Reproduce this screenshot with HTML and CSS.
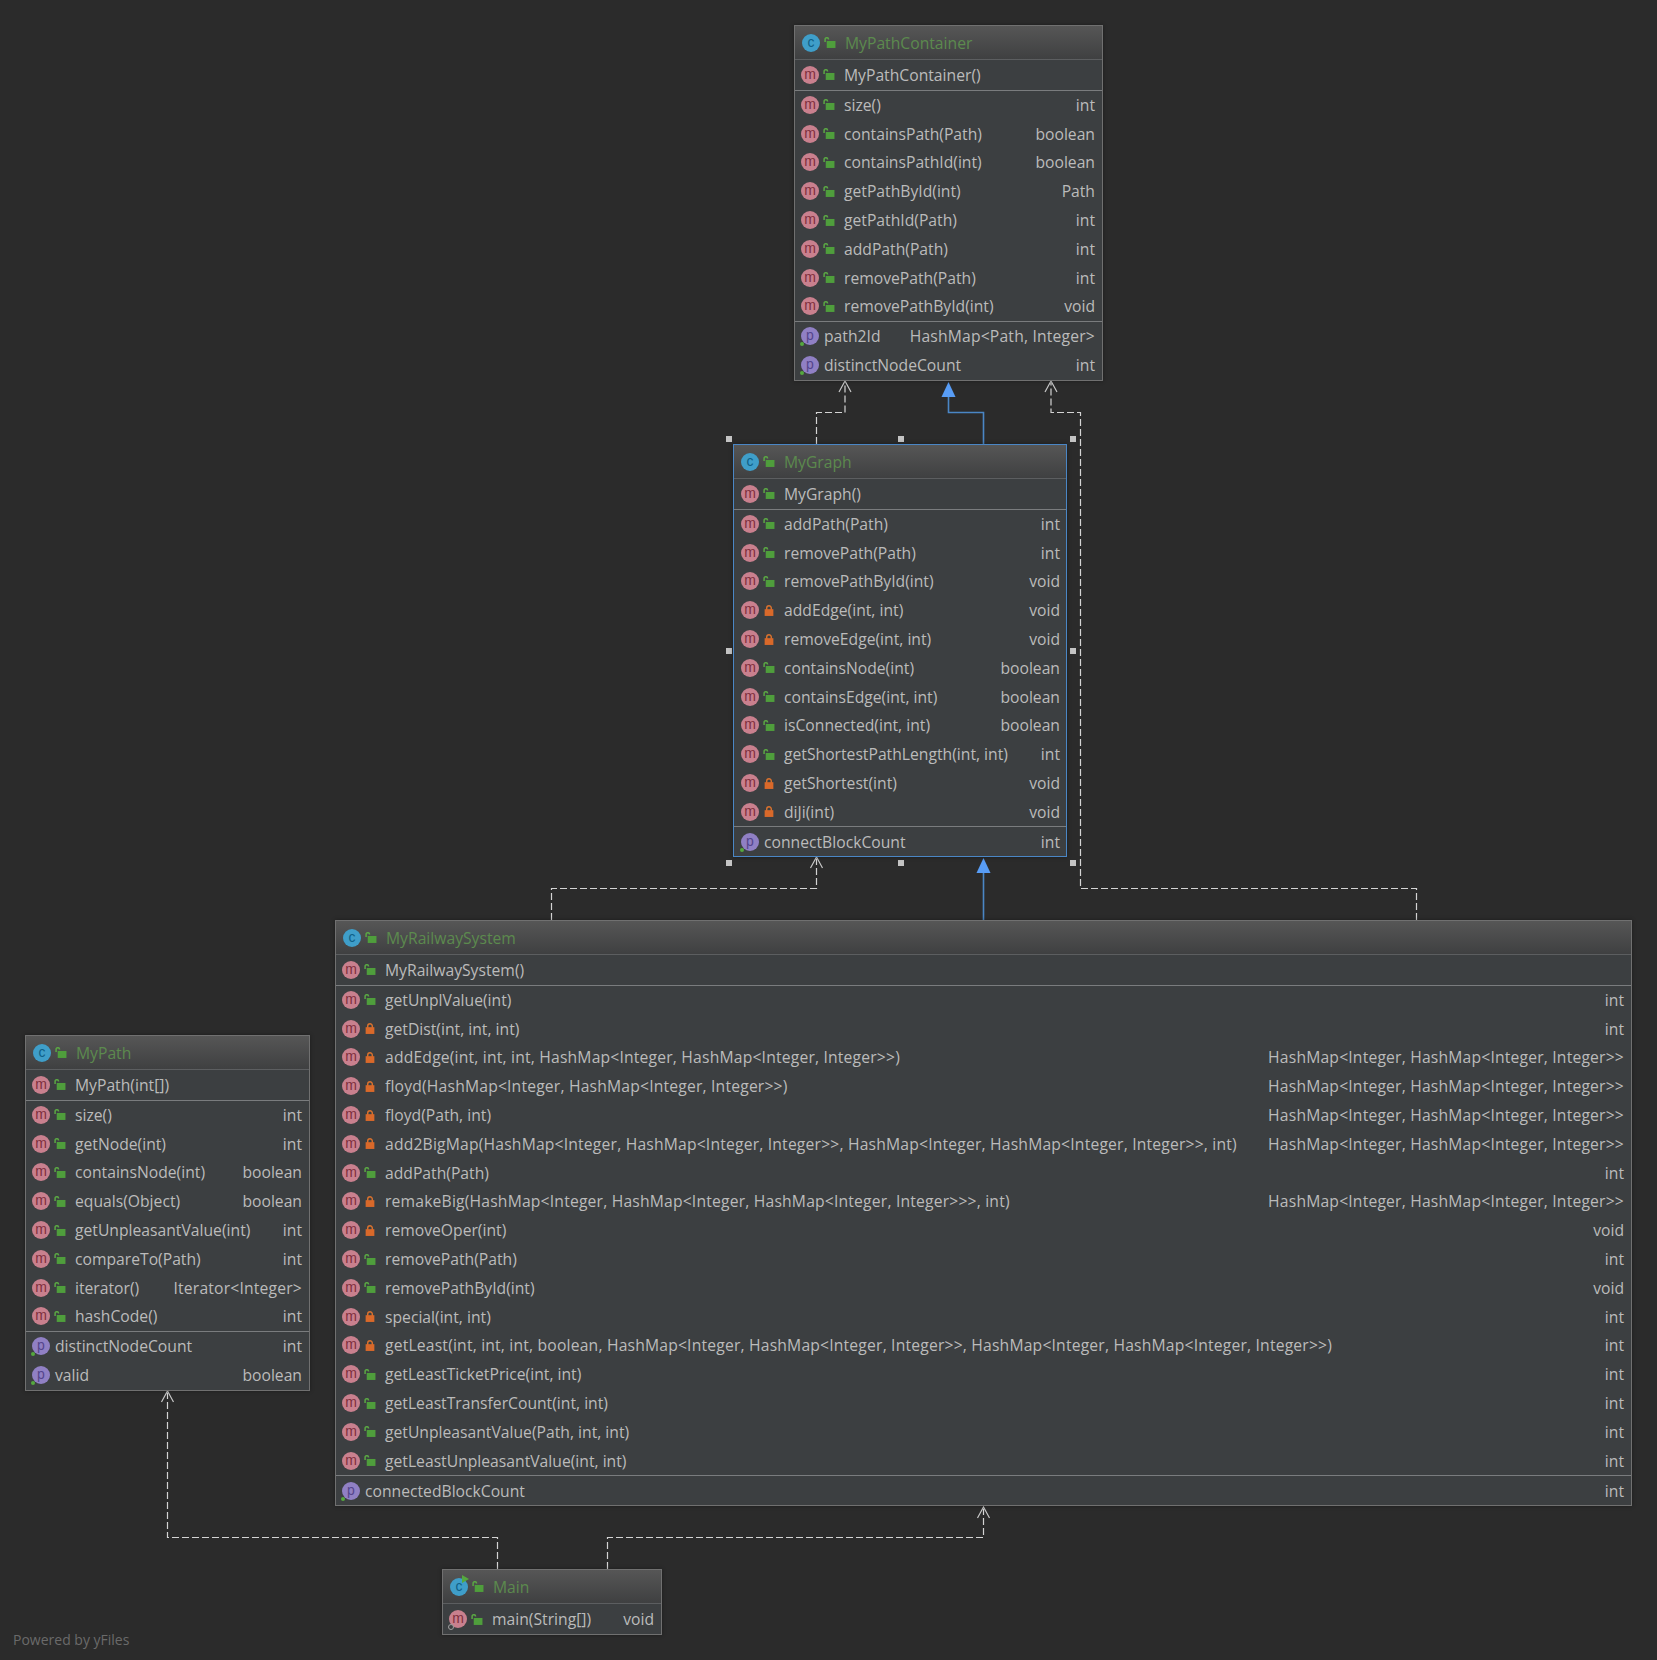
FILE: index.html
```html
<!DOCTYPE html>
<html lang="en">
<head>
    <meta charset="UTF-8">
    <title>Diagram</title>
    <link rel="stylesheet" href="styles.css">
</head>
<body>
<svg class="defs" width="0" height="0">
    <symbol id="pub" viewBox="0 0 11 10">
        <path d="M1 4.5V2.2C1 1 1.8.6 2.6.6S4.2 1 4.2 2.2" fill="none" stroke="#5aa544" stroke-width="1.4"/>
        <rect x="2.5" y="3.6" width="8" height="6.4" fill="#4f9e3c"/>
    </symbol>
    <symbol id="pri" viewBox="0 0 11 10">
        <path d="M3.4 4.5V2.8a2.1 2.1 0 0 1 4.2 0v1.7" fill="none" stroke="#d9722e" stroke-width="1.3"/>
        <rect x="1.5" y="3.8" width="8" height="6.2" fill="#d9692a"/>
    </symbol>
</svg>

<div class="canvas">
    <svg class="edges" width="1657" height="1660" viewBox="0 0 1657 1660">
        <g class="dash">
            <path d="M816.5 444V412.5H845V383"/>
            <path d="M1416.5 920V888.5H1080.5V412.5H1051V383"/>
            <path d="M551.5 920V888.5H816.5V859"/>
            <path d="M497.5 1569V1537.5H167.5V1393"/>
            <path d="M607.5 1569V1537.5H983.5V1509"/>
        </g>
        <g class="open">
            <path d="M839 392L845 381L851 392"/>
            <path d="M1045 392L1051 381L1057 392"/>
            <path d="M810.5 868L816.5 857L822.5 868"/>
            <path d="M161.5 1402L167.5 1391L173.5 1402"/>
            <path d="M977.5 1518L983.5 1507L989.5 1518"/>
        </g>
        <g class="solid">
            <path d="M983.5 444V412.5H948.5V396"/>
            <path d="M983.5 920V871"/>
        </g>
        <g class="head">
            <path d="M948.5 382L955.5 397H941.5Z"/>
            <path d="M983.5 858L990.5 873H976.5Z"/>
        </g>
        <g class="handles">
            <rect x="726" y="436" width="6" height="6"/>
            <rect x="898" y="436" width="6" height="6"/>
            <rect x="1070" y="436" width="6" height="6"/>
            <rect x="726" y="648" width="6" height="6"/>
            <rect x="1070" y="648" width="6" height="6"/>
            <rect x="726" y="860" width="6" height="6"/>
            <rect x="898" y="860" width="6" height="6"/>
            <rect x="1070" y="860" width="6" height="6"/>
        </g>
    </svg>

    <div class="node container-node">
        <div class="title"><i class="ic c">c</i><svg class="lock"><use href="#pub"/></svg><span>MyPathContainer</span></div>
        <div class="ctor"><i class="ic m">m</i><svg class="lock"><use href="#pub"/></svg><span>MyPathContainer()</span></div>
        <div class="methods">
            <div class="row"><i class="ic m">m</i><svg class="lock"><use href="#pub"/></svg><span>size()</span><b>int</b></div>
            <div class="row"><i class="ic m">m</i><svg class="lock"><use href="#pub"/></svg><span>containsPath(Path)</span><b>boolean</b></div>
            <div class="row"><i class="ic m">m</i><svg class="lock"><use href="#pub"/></svg><span>containsPathId(int)</span><b>boolean</b></div>
            <div class="row"><i class="ic m">m</i><svg class="lock"><use href="#pub"/></svg><span>getPathById(int)</span><b>Path</b></div>
            <div class="row"><i class="ic m">m</i><svg class="lock"><use href="#pub"/></svg><span>getPathId(Path)</span><b>int</b></div>
            <div class="row"><i class="ic m">m</i><svg class="lock"><use href="#pub"/></svg><span>addPath(Path)</span><b>int</b></div>
            <div class="row"><i class="ic m">m</i><svg class="lock"><use href="#pub"/></svg><span>removePath(Path)</span><b>int</b></div>
            <div class="row"><i class="ic m">m</i><svg class="lock"><use href="#pub"/></svg><span>removePathById(int)</span><b>void</b></div>
        </div>
        <div class="fields">
            <div class="row"><i class="ic p">p</i><span>path2Id</span><b class="gen">HashMap&lt;Path, Integer&gt;</b></div>
            <div class="row"><i class="ic p">p</i><span>distinctNodeCount</span><b>int</b></div>
        </div>
    </div>

    <div class="node graph-node">
        <div class="title"><i class="ic c">c</i><svg class="lock"><use href="#pub"/></svg><span>MyGraph</span></div>
        <div class="ctor"><i class="ic m">m</i><svg class="lock"><use href="#pub"/></svg><span>MyGraph()</span></div>
        <div class="methods">
            <div class="row"><i class="ic m">m</i><svg class="lock"><use href="#pub"/></svg><span>addPath(Path)</span><b>int</b></div>
            <div class="row"><i class="ic m">m</i><svg class="lock"><use href="#pub"/></svg><span>removePath(Path)</span><b>int</b></div>
            <div class="row"><i class="ic m">m</i><svg class="lock"><use href="#pub"/></svg><span>removePathById(int)</span><b>void</b></div>
            <div class="row"><i class="ic m">m</i><svg class="lock"><use href="#pri"/></svg><span>addEdge(int, int)</span><b>void</b></div>
            <div class="row"><i class="ic m">m</i><svg class="lock"><use href="#pri"/></svg><span>removeEdge(int, int)</span><b>void</b></div>
            <div class="row"><i class="ic m">m</i><svg class="lock"><use href="#pub"/></svg><span>containsNode(int)</span><b>boolean</b></div>
            <div class="row"><i class="ic m">m</i><svg class="lock"><use href="#pub"/></svg><span>containsEdge(int, int)</span><b>boolean</b></div>
            <div class="row"><i class="ic m">m</i><svg class="lock"><use href="#pub"/></svg><span>isConnected(int, int)</span><b>boolean</b></div>
            <div class="row"><i class="ic m">m</i><svg class="lock"><use href="#pub"/></svg><span>getShortestPathLength(int, int)</span><b>int</b></div>
            <div class="row"><i class="ic m">m</i><svg class="lock"><use href="#pri"/></svg><span>getShortest(int)</span><b>void</b></div>
            <div class="row"><i class="ic m">m</i><svg class="lock"><use href="#pri"/></svg><span>diJi(int)</span><b>void</b></div>
        </div>
        <div class="fields">
            <div class="row"><i class="ic p">p</i><span>connectBlockCount</span><b>int</b></div>
        </div>
    </div>

    <div class="node railway-node">
        <div class="title"><i class="ic c">c</i><svg class="lock"><use href="#pub"/></svg><span>MyRailwaySystem</span></div>
        <div class="ctor"><i class="ic m">m</i><svg class="lock"><use href="#pub"/></svg><span>MyRailwaySystem()</span></div>
        <div class="methods">
            <div class="row"><i class="ic m">m</i><svg class="lock"><use href="#pub"/></svg><span>getUnplValue(int)</span><b>int</b></div>
            <div class="row"><i class="ic m">m</i><svg class="lock"><use href="#pri"/></svg><span>getDist(int, int, int)</span><b>int</b></div>
            <div class="row"><i class="ic m">m</i><svg class="lock"><use href="#pri"/></svg><span class="gen">addEdge(int, int, int, HashMap&lt;Integer, HashMap&lt;Integer, Integer&gt;&gt;)</span><b class="gen">HashMap&lt;Integer, HashMap&lt;Integer, Integer&gt;&gt;</b></div>
            <div class="row"><i class="ic m">m</i><svg class="lock"><use href="#pri"/></svg><span class="gen">floyd(HashMap&lt;Integer, HashMap&lt;Integer, Integer&gt;&gt;)</span><b class="gen">HashMap&lt;Integer, HashMap&lt;Integer, Integer&gt;&gt;</b></div>
            <div class="row"><i class="ic m">m</i><svg class="lock"><use href="#pri"/></svg><span>floyd(Path, int)</span><b class="gen">HashMap&lt;Integer, HashMap&lt;Integer, Integer&gt;&gt;</b></div>
            <div class="row"><i class="ic m">m</i><svg class="lock"><use href="#pri"/></svg><span class="gen">add2BigMap(HashMap&lt;Integer, HashMap&lt;Integer, Integer&gt;&gt;, HashMap&lt;Integer, HashMap&lt;Integer, Integer&gt;&gt;, int)</span><b class="gen">HashMap&lt;Integer, HashMap&lt;Integer, Integer&gt;&gt;</b></div>
            <div class="row"><i class="ic m">m</i><svg class="lock"><use href="#pub"/></svg><span>addPath(Path)</span><b>int</b></div>
            <div class="row"><i class="ic m">m</i><svg class="lock"><use href="#pri"/></svg><span class="gen">remakeBig(HashMap&lt;Integer, HashMap&lt;Integer, HashMap&lt;Integer, Integer&gt;&gt;&gt;, int)</span><b class="gen">HashMap&lt;Integer, HashMap&lt;Integer, Integer&gt;&gt;</b></div>
            <div class="row"><i class="ic m">m</i><svg class="lock"><use href="#pri"/></svg><span>removeOper(int)</span><b>void</b></div>
            <div class="row"><i class="ic m">m</i><svg class="lock"><use href="#pub"/></svg><span>removePath(Path)</span><b>int</b></div>
            <div class="row"><i class="ic m">m</i><svg class="lock"><use href="#pub"/></svg><span>removePathById(int)</span><b>void</b></div>
            <div class="row"><i class="ic m">m</i><svg class="lock"><use href="#pri"/></svg><span>special(int, int)</span><b>int</b></div>
            <div class="row"><i class="ic m">m</i><svg class="lock"><use href="#pri"/></svg><span class="gen">getLeast(int, int, int, boolean, HashMap&lt;Integer, HashMap&lt;Integer, Integer&gt;&gt;, HashMap&lt;Integer, HashMap&lt;Integer, Integer&gt;&gt;)</span><b>int</b></div>
            <div class="row"><i class="ic m">m</i><svg class="lock"><use href="#pub"/></svg><span>getLeastTicketPrice(int, int)</span><b>int</b></div>
            <div class="row"><i class="ic m">m</i><svg class="lock"><use href="#pub"/></svg><span>getLeastTransferCount(int, int)</span><b>int</b></div>
            <div class="row"><i class="ic m">m</i><svg class="lock"><use href="#pub"/></svg><span>getUnpleasantValue(Path, int, int)</span><b>int</b></div>
            <div class="row"><i class="ic m">m</i><svg class="lock"><use href="#pub"/></svg><span>getLeastUnpleasantValue(int, int)</span><b>int</b></div>
        </div>
        <div class="fields">
            <div class="row"><i class="ic p">p</i><span>connectedBlockCount</span><b>int</b></div>
        </div>
    </div>

    <div class="node path-node">
        <div class="title"><i class="ic c">c</i><svg class="lock"><use href="#pub"/></svg><span>MyPath</span></div>
        <div class="ctor"><i class="ic m">m</i><svg class="lock"><use href="#pub"/></svg><span>MyPath(int[])</span></div>
        <div class="methods">
            <div class="row"><i class="ic m">m</i><svg class="lock"><use href="#pub"/></svg><span>size()</span><b>int</b></div>
            <div class="row"><i class="ic m">m</i><svg class="lock"><use href="#pub"/></svg><span>getNode(int)</span><b>int</b></div>
            <div class="row"><i class="ic m">m</i><svg class="lock"><use href="#pub"/></svg><span>containsNode(int)</span><b>boolean</b></div>
            <div class="row"><i class="ic m">m</i><svg class="lock"><use href="#pub"/></svg><span>equals(Object)</span><b>boolean</b></div>
            <div class="row"><i class="ic m">m</i><svg class="lock"><use href="#pub"/></svg><span>getUnpleasantValue(int)</span><b>int</b></div>
            <div class="row"><i class="ic m">m</i><svg class="lock"><use href="#pub"/></svg><span>compareTo(Path)</span><b>int</b></div>
            <div class="row"><i class="ic m">m</i><svg class="lock"><use href="#pub"/></svg><span>iterator()</span><b class="gen">Iterator&lt;Integer&gt;</b></div>
            <div class="row"><i class="ic m">m</i><svg class="lock"><use href="#pub"/></svg><span>hashCode()</span><b>int</b></div>
        </div>
        <div class="fields">
            <div class="row"><i class="ic p">p</i><span>distinctNodeCount</span><b>int</b></div>
            <div class="row"><i class="ic p">p</i><span>valid</span><b>boolean</b></div>
        </div>
    </div>

    <div class="node main-node">
        <div class="title"><i class="ic c run">c</i><svg class="lock"><use href="#pub"/></svg><span>Main</span></div>
        <div class="ctor last"><i class="ic m static">m</i><svg class="lock"><use href="#pub"/></svg><span>main(String[])</span><b>void</b></div>
    </div>

    <div class="powered">Powered by yFiles</div>
</div>
</body>
</html>
```
FILE: styles.css
```css
body {
    margin: 0;
    background-color: #2b2b2b;
    font-family: "Open Sans", "Noto Sans", sans-serif;
    font-size: 15.7px;
    color: #bbbbbb;
}
.defs {
    position: absolute;
}
.canvas {
    position: relative;
    width: 1657px;
    height: 1660px;
    overflow: hidden;
}
.edges {
    position: absolute;
    top: 0;
    left: 0;
}
.dash path {
    fill: none;
    stroke: #d4d4d4;
    stroke-width: 1.2;
    stroke-dasharray: 7 3;
}
.open path {
    fill: none;
    stroke: #c8c8c8;
    stroke-width: 1.2;
}
.solid path {
    fill: none;
    stroke: #4a86c5;
    stroke-width: 1.6;
}
.head path {
    fill: #589df6;
}
.handles rect {
    fill: #c4c4c4;
}

/* nodes sit where the diagram put them */
.node {
    position: absolute;
    box-sizing: border-box;
    background-color: #3c3f41;
    border: 1px solid #707070;
    box-shadow: 0 0 4px rgba(0, 0, 0, 0.35);
}
.container-node {
    left: 794px;
    top: 25px;
    width: 309px;
}
.graph-node {
    left: 733px;
    top: 444px;
    width: 334px;
    border-color: #4a86c5;
}
.railway-node {
    left: 335px;
    top: 920px;
    width: 1297px;
}
.path-node {
    left: 25px;
    top: 1035px;
    width: 285px;
}
.main-node {
    left: 442px;
    top: 1569px;
    width: 220px;
}

.title,
.ctor,
.row {
    display: flex;
    align-items: center;
    box-sizing: border-box;
    padding: 0 7px 0 6px;
    white-space: nowrap;
}
.graph-node .ctor,
.graph-node .row {
    padding: 0 6px 0 7px;
}
.title {
    height: 34px;
    padding-left: 7px;
    color: #5c8a4e;
    background: linear-gradient(#565656, #3f4041);
    border-bottom: 1px solid #5c5e60;
}
.ctor {
    height: 30.5px;
    border-bottom: 1px solid #7a7c7e;
}
.ctor.last {
    height: 30px;
    border-bottom: none;
}
.row {
    height: 28.8px;
}
.fields {
    border-top: 1px solid #7a7c7e;
}
.fields .row {
    height: 29px;
}
.row b,
.ctor b {
    margin-left: auto;
    font-weight: normal;
}
.gen {
    letter-spacing: 0.18px;
}

.ic {
    flex: none;
    position: relative;
    display: block;
    width: 18px;
    height: 18px;
    border-radius: 50%;
    margin-right: 4px;
    font-family: "Liberation Sans", sans-serif;
    font-size: 14px;
    font-style: normal;
    line-height: 16px;
    text-align: center;
}
.ic.m {
    background-color: #c9808e;
    color: #7e2f3d;
}
.ic.c {
    background-color: #3f9ec9;
    color: #0f5f86;
}
.ic.p {
    background-color: #9080c4;
    color: #54458c;
    margin-right: 5px;
}
.ic.p::after {
    content: "";
    position: absolute;
    left: -1px;
    bottom: -1px;
    width: 4px;
    height: 4px;
    border-radius: 50%;
    background-color: #55a83e;
}
.ic.run::after {
    content: "";
    position: absolute;
    top: -3px;
    right: -1px;
    border-left: 7px solid #55a83e;
    border-top: 4px solid transparent;
    border-bottom: 4px solid transparent;
}
.ic.static::after {
    content: "";
    position: absolute;
    left: -1px;
    bottom: -2px;
    width: 4px;
    height: 4px;
    border: 1px solid #a0a0a0;
    border-radius: 50%;
    background-color: #3c3f41;
}
.lock {
    flex: none;
    width: 12px;
    height: 11px;
    margin-right: 9px;
}
.powered {
    position: absolute;
    left: 13px;
    top: 1630px;
    font-size: 14px;
    color: #6a6a6a;
}
```
